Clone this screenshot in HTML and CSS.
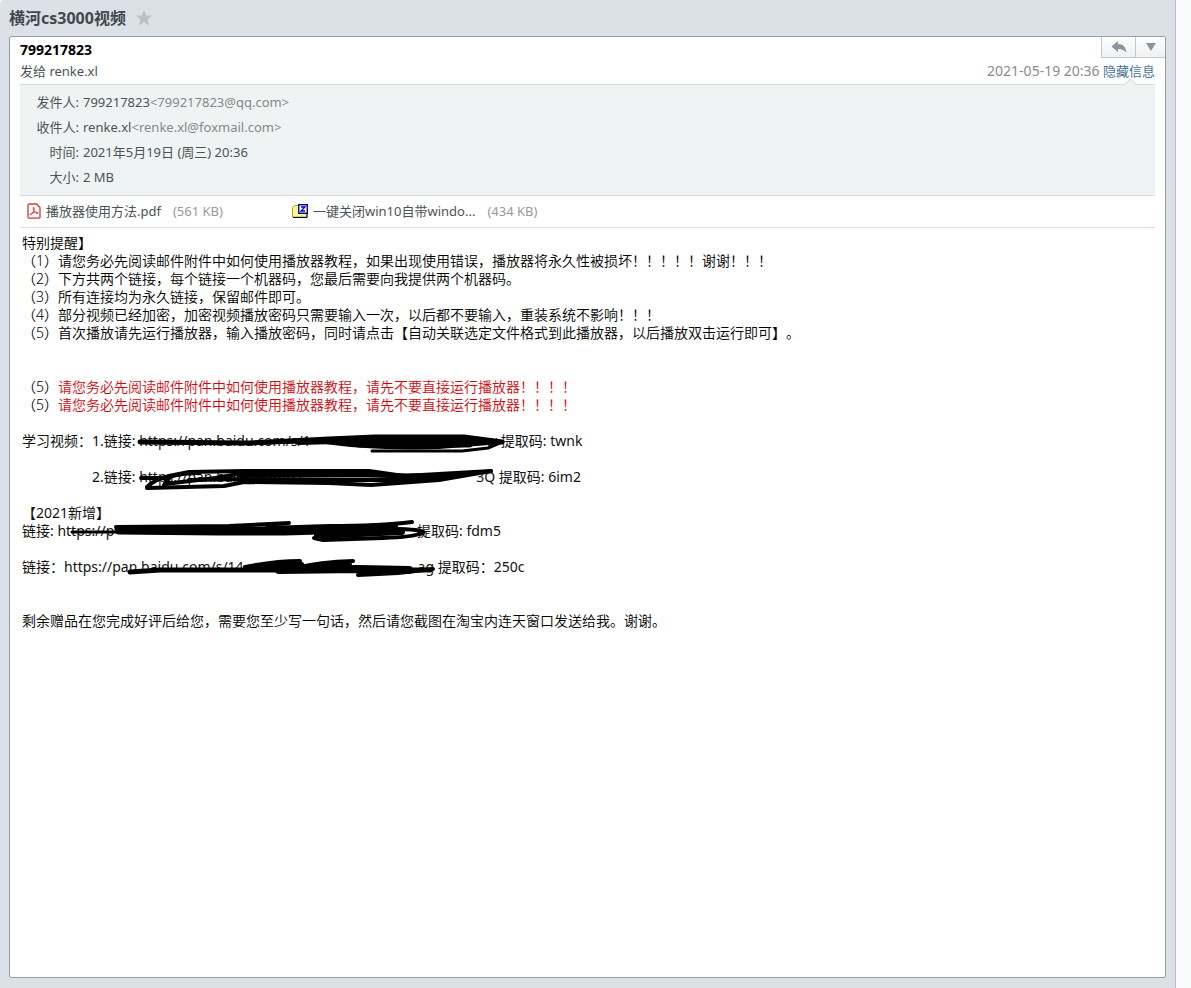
FILE: index.html
```
<!DOCTYPE html>
<html lang="zh-CN">
<head>
    <meta charset="UTF-8">
    <meta name="viewport" content="width=device-width, initial-scale=1.0">
    <title>横河cs3000视频</title>
    <link rel="stylesheet" href="styles.css">
</head>
<body>
    <div class="reader">
        <div class="subject">
            <h1>横河cs3000视频</h1>
            <button class="star" aria-label="星标">
                <svg width="18" height="18" viewBox="0 0 18 18"><path d="M9 0.5l2.2 6h6.3l-5 3.9 1.9 6.3L9 13l-5.4 3.7 1.9-6.3-5-3.9h6.3z" fill="#bcc1c6"/></svg>
            </button>
        </div>

        <main class="mail">
            <!-- 邮件头 -->
            <header class="mail-head">
                <div class="sender">
                    <strong>799217823</strong>
                    <span>发给 renke.xl</span>
                </div>
                <div class="head-right">
                    <div class="actions">
                        <button class="reply" aria-label="回复">
                            <svg width="16" height="12" viewBox="0 0 16 12"><path d="M7 0v3c5 0 8 3 8.500 9C13.500 9 11 8 7 8v3L0.500 5.500z" fill="#8b939b"/></svg>
                        </button>
                        <button class="more" aria-label="更多">
                            <svg width="10" height="8" viewBox="0 0 10 8"><path d="M0 0h10L5 8z" fill="#8b939b"/></svg>
                        </button>
                    </div>
                    <div class="date">
                        <time>2021-05-19 20:36</time>
                        <a href="#info">隐藏信息</a>
                    </div>
                </div>
            </header>

            <!-- 详细信息 -->
            <dl class="info" id="info">
                <dt>发件人:</dt>
                <dd>799217823<span class="addr">&lt;799217823@qq.com&gt;</span></dd>
                <dt>收件人:</dt>
                <dd>renke.xl<span class="addr">&lt;renke.xl@foxmail.com&gt;</span></dd>
                <dt>时间:</dt>
                <dd>2021年5月19日 (周三) 20:36</dd>
                <dt>大小:</dt>
                <dd>2 MB</dd>
            </dl>

            <!-- 附件 -->
            <ul class="files">
                <li>
                    <svg width="14" height="16" viewBox="0 0 14 16" fill="none" stroke="#d2383c">
                        <path d="M2.500 1h7L13 4.500v9.500a1.200 1.200 0 0 1-1.200 1.200H2.200A1.200 1.200 0 0 1 1 14V2.500A1.500 1.500 0 0 1 2.500 1z" stroke-width="1.300"/>
                        <path d="M6.300 4.500c1.600-.5.900 2.300-.2 4.500-1 2-2.600 3.600-3 2.800-.4-.9 3.100-2.300 5.400-2.500 2-.2 3.200.6 2.400 1.200-.9.600-2.800-1-3.900-3-.7-1.300-1.400-2.700-.7-3z"/>
                    </svg>
                    <a href="#">播放器使用方法.pdf</a>
                    <span class="size">(561 KB)</span>
                </li>
                <li>
                    <svg width="16" height="14" viewBox="0 0 16 14">
                        <path d="M0.500 3.500l2-2h4v1H15v10.500H0.500z" fill="#fbf78c" stroke="#a5a23c"/>
                        <path d="M1 13.500h14V10" fill="none" stroke="#000"/>
                        <path d="M6.700.7h8.600v8.600H6.700z" fill="#fff" stroke="#0a0a9c" stroke-width="1.400"/>
                        <path d="M9 3h4L9 7h4" fill="none" stroke="#0a0a9c" stroke-width="1.300"/>
                    </svg>
                    <a href="#">一键关闭win10自带windo...</a>
                    <span class="size">(434 KB)</span>
                </li>
            </ul>

            <!-- 正文 -->
            <article class="content">
                <p>特别提醒】</p>
                <p>（1）请您务必先阅读邮件附件中如何使用播放器教程，如果出现使用错误，播放器将永久性被损坏！！！！！谢谢！！！</p>
                <p>（2）下方共两个链接，每个链接一个机器码，您最后需要向我提供两个机器码。</p>
                <p>（3）所有连接均为永久链接，保留邮件即可。</p>
                <p>（4）部分视频已经加密，加密视频播放密码只需要输入一次，以后都不要输入，重装系统不影响！！！</p>
                <p>（5）首次播放请先运行播放器，输入播放密码，同时请点击【自动关联选定文件格式到此播放器，以后播放双击运行即可】。</p>
                <br><br>
                <p>（5）<span class="warn">请您务必先阅读邮件附件中如何使用播放器教程，请先不要直接运行播放器！！！！</span></p>
                <p>（5）<span class="warn">请您务必先阅读邮件附件中如何使用播放器教程，请先不要直接运行播放器！！！！</span></p>
                <br>
                <p class="share">学习视频：1.链接:
                    <span class="link">
                        <span>https://pan.baidu.com/s/1</span><span>w</span>
                        <svg class="scribble" width="358" height="18" viewBox="0 0 358 18">
                            <path d="M1 10l109 1 80-4 46-2h89l38 5" stroke-width="5"/>
                            <path d="M110 11l70-2q50 8 120 6l62-5" stroke-width="4"/>
                            <path d="M160 10l75-2 100 1 20 1" stroke-width="6"/>
                            <path d="M220 11h110" stroke-width="9"/>
                            <path d="M233 19h90l26-3 14-6" stroke-width="3"/>
                        </svg>
                    </span>
                    提取码: twnk</p>
                <br>
                <p class="share second">2.链接:
                    <span class="link short">
                        <span>https://pan.baidu.com/s/</span><span>3Q</span>
                        <svg class="scribble" width="356" height="18" viewBox="0 0 356 18">
                            <path d="M2 10h24M8 19q8-8 22-11l20-4 55-1h125l35 5 87-5" stroke-width="4"/>
                            <path d="M8 20l77-2 20-4 85 1 42 2 68-5 52-9" stroke-width="4"/>
                            <path d="M25 17l6-8q10-4 29-4M26 16l50-6 29-5" stroke-width="4"/>
                            <path d="M100 7h130l40 1 50-1" stroke-width="5"/>
                            <path d="M50 12l55-1 95 1 65 0 40-2" stroke-width="4"/>
                        </svg>
                    </span>
                    提取码: 6im2</p>
                <br>
                <p class="share">【2021新增】</p>
                <p class="share">链接:
                    <span class="link short">
                        <span>https://p</span>
                        <svg class="scribble" width="356" height="18" viewBox="0 0 356 18">
                            <path d="M15 10h50" stroke-width="3"/>
                            <path d="M62 8l100 1 65 0 110-3" stroke-width="9"/>
                            <path d="M59 5l113-1 60-3M210 6l62-2q50 0 83-4" stroke-width="4"/>
                            <path d="M212 11l130-4q28 1 24 4-10 4-40 5l-60 2-9-2" stroke-width="4"/>
                            <path d="M260 14l85-4" stroke-width="6"/>
                        </svg>
                    </span>
                    提取码: fdm5</p>
                <br>
                <p class="share">链接：<span class="link wide">
                        <span>https://pan.baidu.com/s/14</span><span>ag</span>
                        <svg class="scribble" width="370" height="18" viewBox="0 0 370 18">
                            <path d="M66 14l30-2 270 0" stroke-width="5"/>
                            <path d="M181 9q30-6 55-6M190 10l48-4M231 10q25-6 58-7M250 9l36-3" stroke-width="4"/>
                            <path d="M215 12l80-1 50 1" stroke-width="8"/>
                            <path d="M294 17l40-2 35-4" stroke-width="4"/>
                        </svg>
                    </span>
                    提取码：250c</p>
                <br><br>
                <p>剩余赠品在您完成好评后给您，需要您至少写一句话，然后请您截图在淘宝内连天窗口发送给我。谢谢。</p>
            </article>
        </main>
    </div>
</body>
</html>
```

FILE: styles.css
```
* {
    box-sizing: border-box;
}
body {
    margin: 0;
    background: #fafcfc;
    font-family: "Noto Sans", "Noto Sans CJK SC", sans-serif;
    font-size: 13px;
    line-height: 20px;
    color: #4c5358;
    text-spacing-trim: space-all;
}
h1, p, dl, dd, ul {
    margin: 0;
    padding: 0;
}
button {
    display: flex;
    align-items: center;
    justify-content: center;
    padding: 0;
    border: none;
    background: none;
    cursor: pointer;
}
a {
    color: inherit;
    text-decoration: none;
}
.reader {
    display: flex;
    flex-direction: column;
    min-height: 100vh;
    margin-right: 15px;
    padding: 0 9px 10px;
    background: #dbe1e6;
    border-right: 1px solid #b4c2ca;
    border-top-left-radius: 4px;
}
.subject {
    display: flex;
    align-items: center;
    gap: 9px;
    height: 36px;
}
.subject h1 {
    font-size: 16px;
    line-height: 24px;
    color: #41484e;
}
.mail {
    flex: 1;
    background: #fff;
    border: 1px solid #979fa4;
    border-radius: 2px;
}
.mail-head {
    display: flex;
    justify-content: space-between;
    height: 47px;
    padding-left: 10px;
}
.sender {
    display: flex;
    flex-direction: column;
    padding-top: 2px;
}
.sender strong {
    font-size: 14px;
    color: #000;
    line-height: 22px;
}
.head-right {
    display: flex;
    flex-direction: column;
    align-items: flex-end;
    gap: 3px;
}
.actions {
    display: flex;
    height: 21px;
    border: 1px solid #c3c8cc;
    border-width: 0 0 1px 1px;
    background: linear-gradient(#fff, #eef0f2);
}
.reply {
    width: 33px;
}
.more {
    width: 30px;
    border-left: 1px solid #c3c8cc;
}
.date {
    padding-right: 10px;
    color: #8c8c8c;
}
.date time {
    font-size: 14px;
}
.date a {
    color: #467299;
}
.info {
    position: relative;
    display: grid;
    grid-template-columns: 59px 1fr;
    column-gap: 4px;
    margin: 0 10px;
    padding: 5px 0;
    line-height: 25px;
    background: #eff3f3;
    border-top: 1px solid #d5dadc;
    border-bottom: 1px solid #d5dadc;
}
/* 指向“隐藏信息”的小三角 */
.info::before {
    content: "";
    position: absolute;
    top: -5px;
    right: 20px;
    width: 8px;
    height: 8px;
    background: linear-gradient(135deg, #eff3f3 50%, transparent 50%);
    border: 1px solid #d5dadc;
    border-width: 1px 0 0 1px;
    transform: rotate(45deg);
}
.info dt {
    text-align: right;
}
.addr {
    color: #888;
}
.files {
    display: flex;
    align-items: center;
    height: 32px;
    margin: 0 10px;
    padding: 0 0 2px 7px;
    list-style: none;
    border-bottom: 1px solid #d9dddf;
}
.files li {
    display: flex;
    align-items: center;
    width: 265px;
    gap: 5px;
    white-space: nowrap;
}
.files .size {
    margin-left: 7px;
    color: #999;
}
.content {
    padding: 6px 12px;
    font-size: 14px;
    font-weight: 350;
    line-height: 18px;
    color: #000;
}
.content p {
    min-height: 18px;
}
.content .share {
    font-weight: 400;
    color: #111;
}
.content .second {
    padding-left: 70px;
}
.warn {
    color: #d4080f;
}
.link {
    position: relative;
    display: inline-flex;
    justify-content: space-between;
    width: 358px;
    height: 18px;
    vertical-align: top;
}
.link.short {
    width: 356px;
}
.link.wide {
    width: 370px;
}
.scribble {
    position: absolute;
    top: 0;
    left: 0;
    overflow: visible;
    fill: none;
    stroke: #000;
    stroke-linecap: round;
    stroke-linejoin: round;
}
```
